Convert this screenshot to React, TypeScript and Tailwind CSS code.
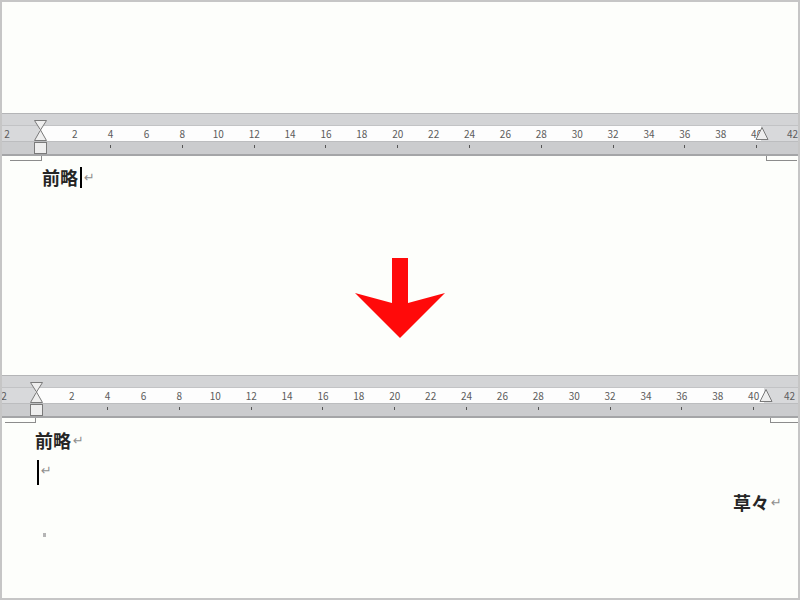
import React from 'react'

const labels = ['2', '', '2', '4', '6', '8', '10', '12', '14', '16', '18', '20', '22', '24', '26', '28', '30', '32', '34', '36', '38', '40', '42']

function Ruler({ shifted }: { shifted?: boolean }) {
  return (
    <div className="relative h-[43px] shrink-0 flex flex-col">
      <div className="h-[1px] bg-[#b4b5b7]" />
      <div className="h-[12px] bg-[#d3d4d6] border-b border-[#c2c3c5]" />
      <div
        className={
          shifted
            ? 'h-[15px] flex overflow-hidden bg-[linear-gradient(to_right,#d8d9db_33px,#fdfdfd_33px,#fdfdfd_762px,#d8d9db_762px)]'
            : 'h-[15px] flex overflow-hidden bg-[linear-gradient(to_right,#d8d9db_37px,#fdfdfd_37px,#fdfdfd_759px,#d8d9db_759px)]'
        }
      >
        <div className={shifted ? 'flex shrink-0 ml-[-20px]' : 'flex shrink-0 ml-[-17px]'}>
          {labels.map((l, i) => (
            <div
              key={i}
              className={
                i === 0
                  ? 'w-[35.9px] shrink-0 text-right pr-[11px] text-[10px] leading-[15px] text-[#5b5b5b] font-[\'Liberation_Sans\',sans-serif]'
                  : 'w-[35.9px] shrink-0 text-center text-[10px] leading-[15px] text-[#5b5b5b] font-[\'Liberation_Sans\',sans-serif]'
              }
            >
              {l}
            </div>
          ))}
        </div>
      </div>
      <div className="h-[13px] bg-[#cbccce] border-t border-[#bcbdbf] flex overflow-hidden">
        <div className={shifted ? 'flex shrink-0 ml-[-20px]' : 'flex shrink-0 ml-[-17px]'}>
          {labels.map((_, i) => (
            <div key={i} className="w-[35.9px] shrink-0 flex justify-center pt-[3px]">
              {i >= 3 && i % 2 === 1 && <div className="w-[1px] h-[3px] bg-[#555]" />}
            </div>
          ))}
        </div>
      </div>
      <div className="h-[2px] bg-[#a4a5a7]" />

      {/* indent markers */}
      <svg
        className={shifted ? 'absolute top-[6px] left-[27px]' : 'absolute top-[6px] left-[31px]'}
        width="15"
        height="37"
        viewBox="0 0 15 37"
      >
        <path d="M1.5 1.5 H13.5 L7.5 11 L13.5 21.5 H1.5 L7.5 11 Z" fill="#eeeeee" stroke="#7a7a7a" strokeWidth="1" />
        <rect x="1.5" y="23.5" width="12" height="11" fill="#eeeeee" stroke="#7a7a7a" strokeWidth="1" />
      </svg>
      <svg
        className={shifted ? 'absolute top-[13px] left-[757px]' : 'absolute top-[13px] left-[753px]'}
        width="14"
        height="16"
        viewBox="0 0 14 16"
      >
        <path d="M7 1.5 L13 13.5 H1 Z" fill="#eeeeee" stroke="#7a7a7a" strokeWidth="1" />
      </svg>
    </div>
  )
}

function Brackets({ shifted }: { shifted?: boolean }) {
  return (
    <div className="h-[5px] shrink-0 flex justify-between">
      <div
        className={
          shifted
            ? 'ml-[3px] w-[31px] h-full border-b border-r border-[#8c8c8c]'
            : 'ml-[8px] w-[32px] h-full border-b border-r border-[#8c8c8c]'
        }
      />
      <div
        className={
          shifted
            ? 'mr-[0px] w-[28px] h-full border-b border-l border-[#8c8c8c]'
            : 'mr-[1px] w-[31px] h-full border-b border-l border-[#8c8c8c]'
        }
      />
    </div>
  )
}

function Mark() {
  return <span className="text-[13px] text-[#8f8f8f] font-['DejaVu_Sans',sans-serif] ml-[2px] leading-[22px]">↵</span>
}

export default function App() {
  return (
    <div className="w-[800px] h-[600px] border-2 border-[#c6c6c6] bg-[#fdfefb] overflow-hidden flex flex-col font-['Noto_Sans_CJK_JP',sans-serif] text-[#262626]">
      <div className="h-[111px] shrink-0" />
      <Ruler />
      <Brackets />

      <div className="h-[30px] shrink-0 pt-[6px] pl-[40px] flex items-start">
        <span className="text-[18px] leading-[20px] font-bold">前略</span>
        <div className="w-[2px] h-[21px] bg-black ml-[2px]" />
        <Mark />
      </div>

      <div className="h-[67px] shrink-0" />
      <div className="h-[80px] shrink-0 flex justify-center">
        <svg width="90" height="80" viewBox="0 0 90 80">
          <path d="M37 0 H53 V45 L90 35 L45 80 L0 35 L37 45 Z" fill="#ff0a0a" />
        </svg>
      </div>
      <div className="h-[37px] shrink-0" />

      <Ruler shifted />
      <Brackets shifted />

      <div className="h-[30px] shrink-0 pt-[7px] pl-[33px] flex items-start">
        <span className="text-[18px] leading-[20px] font-bold">前略</span>
        <Mark />
      </div>
      <div className="h-[33px] shrink-0 pt-[7px] pl-[35px] flex items-start">
        <div className="w-[2px] h-[25px] bg-black" />
        <Mark />
      </div>
      <div className="h-[30px] shrink-0 pt-[6px] pr-[16px] flex justify-end items-start">
        <span className="text-[18px] leading-[20px] font-bold">草々</span>
        <Mark />
      </div>
      <div className="pl-[41px] pt-[17px]">
        <div className="w-[3px] h-[4px] bg-[#b5b5b5]" />
      </div>
    </div>
  )
}
